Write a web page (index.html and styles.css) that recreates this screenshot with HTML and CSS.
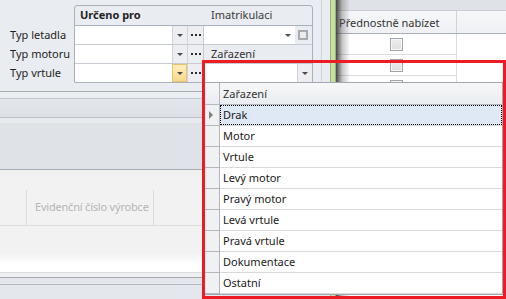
FILE: index.html
```html
<!DOCTYPE html>
<html lang="cs">
<head>
<meta charset="utf-8">
<title>Zařazení</title>
<link rel="stylesheet" href="styles.css">
</head>
<body>
<div class="app">
  <div class="left">
    <div class="top">
      <div class="top-inner">
        <div class="labels">
          <div class="lbl">Typ letadla</div>
          <div class="lbl">Typ motoru</div>
          <div class="lbl">Typ vrtule</div>
        </div>
        <div class="gbox">
          <div class="grow ghead">
            <div class="c1 bold">Určeno pro</div>
            <div class="c2 htxt">Imatrikulaci</div>
          </div>
          <div class="grow">
            <div class="inp"></div>
            <div class="btn"><span class="arr"></span></div>
            <div class="btn dots"><span class="dot"></span><span class="dot"></span><span class="dot"></span></div>
            <div class="c2 split">
              <div class="inp2"><span class="arr"></span></div>
              <div class="chkwrap"><span class="chk"></span></div>
            </div>
          </div>
          <div class="grow">
            <div class="inp"></div>
            <div class="btn"><span class="arr"></span></div>
            <div class="btn dots"><span class="dot"></span><span class="dot"></span><span class="dot"></span></div>
            <div class="c2 htxt">Zařazení</div>
          </div>
          <div class="grow last">
            <div class="inp"></div>
            <div class="btn hot"><span class="arr"></span></div>
            <div class="btn dots"><span class="dot"></span><span class="dot"></span><span class="dot"></span></div>
            <div class="c2 split">
              <div class="inp3"></div>
              <div class="btn2"><span class="arr"></span></div>
            </div>
          </div>
        </div>
      </div>
    </div>
    <div class="band b1"></div>
    <div class="band b2"></div>
    <div class="band b3"></div>
    <div class="band b4"></div>
    <div class="band b5"></div>
    <div class="colhdr">
      <div class="ch-ind"></div>
      <div class="ch-cell">Evidenční číslo výrobce</div>
    </div>
    <div class="band b6"></div>
    <div class="band b7"></div>
    <div class="band b8"></div>
    <div class="band b9"></div>
  </div>
  <div class="splitter"></div>
  <div class="right">
    <div class="rp-top"></div>
    <div class="rp-row rp-hdr">
      <div class="rc1 hdrtxt">Přednostně nabízet</div>
      <div class="rc2"></div>
    </div>
    <div class="rp-row"><div class="rc1"><span class="cb"></span></div><div class="rc2"></div></div>
    <div class="rp-row"><div class="rc1"><span class="cb"></span></div><div class="rc2"></div></div>
    <div class="rp-row"><div class="rc1"><span class="cb"></span></div><div class="rc2"></div></div>
    <div class="rp-row"><div class="rc1"><span class="cb"></span></div><div class="rc2"></div></div>
    <div class="shadow"></div>
  </div>
</div>

<div class="popup">
  <div class="prow phead"><div class="ind"></div><div class="pcell">Zařazení</div></div>
  <div class="prow sel"><div class="ind"><span class="tri"></span></div><div class="pcell"><span class="focus">Drak</span></div></div>
  <div class="prow"><div class="ind"></div><div class="pcell">Motor</div></div>
  <div class="prow"><div class="ind"></div><div class="pcell">Vrtule</div></div>
  <div class="prow"><div class="ind"></div><div class="pcell">Levý motor</div></div>
  <div class="prow"><div class="ind"></div><div class="pcell">Pravý motor</div></div>
  <div class="prow"><div class="ind"></div><div class="pcell">Levá vrtule</div></div>
  <div class="prow"><div class="ind"></div><div class="pcell">Pravá vrtule</div></div>
  <div class="prow"><div class="ind"></div><div class="pcell">Dokumentace</div></div>
  <div class="prow"><div class="ind"></div><div class="pcell">Ostatní</div></div>
</div>
<div class="redmark"></div>
</body>
</html>
```

FILE: styles.css
```css
* { box-sizing: border-box; }
html, body { margin: 0; padding: 0; }
body {
  width: 506px;
  height: 299px;
  overflow: hidden;
  position: relative;
  font-family: "Noto Sans", "Open Sans", sans-serif;
  font-size: 11px;
  color: #1e1e1e;
  background: #e9ecf0;
}
.app { display: flex; height: 299px; }
.left { width: 330px; display: flex; flex-direction: column; }

.top { height: 92px; border-bottom: 1px solid #a7acb3; background: #e9ecf0; }
.top-inner {
  width: 322px; height: 100%;
  border-right: 1px solid #d2d6db;
  display: flex;
  padding: 5px 0 0 10px;
}
.labels { width: 64px; padding-top: 21px; }
.lbl { height: 19px; line-height: 17px; white-space: nowrap; }

.gbox {
  width: 239px; height: 78px;
  border: 1px solid #aab1ba;
  border-radius: 3px 3px 0 0;
  display: flex; flex-direction: column;
}
.grow { display: flex; height: 19px; border-bottom: 1px solid #c6cbd2; }
.grow.ghead { height: 20px; border-bottom-color: #aab1ba; }
.grow.last { height: 18px; border-bottom: 0; }
.c1 { width: 129px; padding-left: 5px; line-height: 18px; }
.bold { font-weight: bold; color: #222; }
.c2 { flex: 1; }
.htxt { padding-left: 7px; line-height: 18px; color: #333; white-space: nowrap; }
.ghead .htxt { color: #3a3a3a; }
.inp { width: 97px; background: #fff; }
.btn {
  width: 15px; border-left: 1px solid #d0d4da;
  display: flex; align-items: center; justify-content: center;
  background: #eceef1;
}
.btn.dots { width: 17px; gap: 2px; border-right: 1px solid #c6cbd2; }
.btn.hot { background: linear-gradient(#fdeec0, #f8d98a); border: 1px solid #e6c56e; }
.dot { width: 2px; height: 2px; background: #2b2b2b; }
.arr {
  width: 0; height: 0;
  border-left: 3px solid transparent;
  border-right: 3px solid transparent;
  border-top: 3px solid #4a4a4a;
}
.split { display: flex; }
.inp2 { width: 91px; background: #fff; display: flex; align-items: center; justify-content: flex-end; padding-right: 4px; }
.chkwrap { flex: 1; display: flex; align-items: center; padding-left: 3px; }
.chk { width: 10px; height: 10px; border: 2px solid #a7abb1; background: #ececec; }
.inp3 { width: 93px; background: #fff; }
.btn2 { flex: 1; border-left: 1px solid #cfd3d9; display: flex; align-items: center; justify-content: center; background: #eceef1; }

.band { flex: none; }
.b1 { height: 7px; background: #eceff2; border-bottom: 1px solid #c3c7cd; }
.b2 { height: 19px; background: linear-gradient(#e3e6ea, #dcdfe3); border-bottom: 1px solid #b9bdc3; }
.b3 { height: 5px; background: #e8ebee; }
.b4 { height: 47px; background: #dfe2e6; border-bottom: 1px solid #a9aeb4; }
.b5 { height: 20px; background: #f2f2f2; }
.colhdr { height: 36px; display: flex; background: #f2f2f2; border-bottom: 1px solid #dcdcdc; }
.ch-ind { width: 27px; border-right: 1px solid #dcdcdc; }
.ch-cell { width: 127px; border-right: 1px solid #dcdcdc; padding-left: 8px; line-height: 34px; color: #b5b5b5; white-space: nowrap; overflow: hidden; letter-spacing: -0.2px; }
.b6 { height: 47px; background: linear-gradient(#f2f2f2 0, #f2f2f2 27px, #fff 38px, #fff 100%); border-bottom: 1px solid #d9dbde; }
.b7 { height: 5px; background: #eef0f2; border-bottom: 1px solid #a6aab0; }
.b8 { height: 7px; background: #e3e6ea; border-bottom: 1px solid #b4b8be; }
.b9 { flex: 1; background: #e4e7eb; }

.splitter {
  width: 6px;
  background: #c8dfa4;
  border-left: 1px solid #97b673;
  border-right: 1px solid #97b673;
}
.right { flex: 1; background: #fff; position: relative; }
.rp-top { height: 11px; background: #dfe2e6; border-bottom: 1px solid #c9cdd2; }
.rp-row { display: flex; height: 21px; }
.rp-hdr { height: 23px; background: linear-gradient(#f6f7f9, #eef0f3); border-bottom: 1px solid #a9aeb4; }
.rc1 { width: 121px; border-right: 1px solid #d8dbdf; border-bottom: 1px solid #dcdcdc; display: flex; align-items: center; justify-content: center; }
.rp-hdr .rc1 { border-bottom: 0; border-right-color: #cfd3d8; }
.hdrtxt { justify-content: flex-start; padding-left: 3px; color: #333; white-space: nowrap; }
.rc2 { flex: 1; }
.cb { width: 13px; height: 13px; border: 1px solid #a0a5ab; background: linear-gradient(#eeeeee, #dedede); box-shadow: inset 0 0 0 1px #f7f7f7; }
.shadow {
  position: absolute; left: 0; top: 0; bottom: 0; width: 14px;
  background: linear-gradient(to right, rgba(40,40,40,0.85), rgba(90,90,90,0.35) 45%, rgba(255,255,255,0));
}

.popup {
  position: absolute; left: 203px; top: 82px;
  width: 300px; height: 213px;
  background: #fff;
  border: 1px solid #a3a8ae;
}
.prow { display: flex; height: 21px; }
.ind { width: 16px; background: #f0f1f3; border-right: 1px solid #b4b8be; border-bottom: 1px solid #b4b8be; display: flex; align-items: center; justify-content: center; }
.pcell { flex: 1; padding-left: 3px; line-height: 20px; border-bottom: 1px solid #d9d9d9; color: #1a1a1a; white-space: nowrap; }
.phead { height: 22px; background: linear-gradient(#f6f7f9, #e9ecf0); }
.phead .ind { background: transparent; border-bottom-color: #b4b8be; }
.phead .pcell { border-bottom: 1px solid #b4b8be; color: #333; line-height: 21px; }
.sel .pcell { background: #dfe9f5; padding: 0; }
.focus { display: block; height: 20px; line-height: 18px; padding-left: 2px; border: 1px dotted #000; }
.tri {
  width: 0; height: 0;
  border-top: 4px solid transparent;
  border-bottom: 4px solid transparent;
  border-left: 4px solid #808080;
  margin-left: -1px;
}
.redmark {
  position: absolute; left: 202px; top: 60px;
  width: 304px; height: 239px;
  border: 3px solid #ed1c24;
}
```
